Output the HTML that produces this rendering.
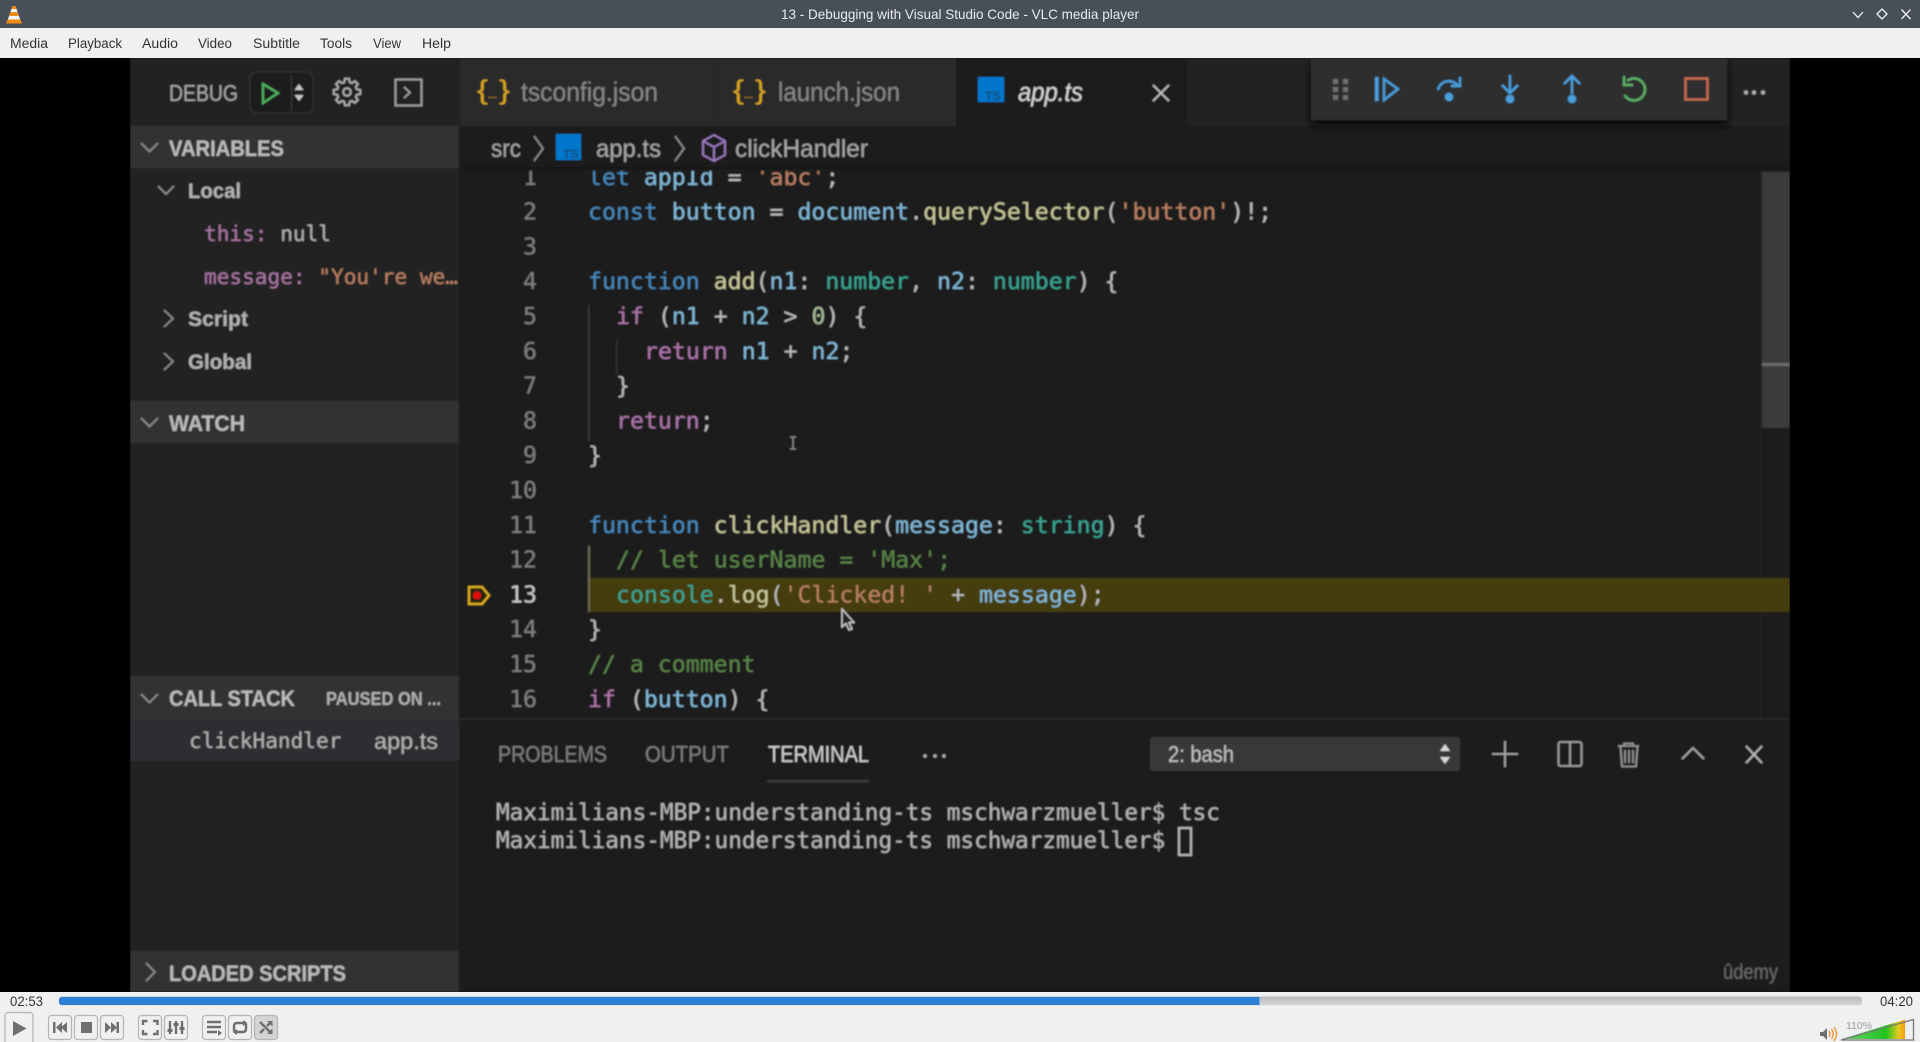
<!DOCTYPE html>
<html><head><meta charset="utf-8"><title>13 - Debugging with Visual Studio Code - VLC media player</title>
<style>
html,body{margin:0;padding:0;background:#000;width:1920px;height:1042px;overflow:hidden}
svg{display:block;position:absolute;left:0;top:0}
text{white-space:pre}
.s{font-family:"Liberation Sans",sans-serif}
.m{font-family:"DejaVu Sans Mono","Liberation Mono",monospace}
.c{font-size:23.2px}
.b{font-weight:bold}
.k{fill:#4a8bbf}.v{fill:#84bcdc}.f{fill:#cbcb9c}.t{fill:#3aa896}.q{fill:#bc8265}.p{fill:#b077ad}.g{fill:#5c8649}.d{fill:#bdbdbd}
.n{fill:#808080;font-size:23.2px}
.ch{fill:none;stroke:#8e8e8e;stroke-width:1.700}
.ctl{fill:#eff0f1;stroke:#b4b4b4;stroke-width:1.2}
.ic{fill:#6f6f6f}
.ils{fill:none;stroke:#6f6f6f;stroke-width:2.4}
.bl{fill:none;stroke:#4a9fdc;stroke-width:2.400}
.menu{font-size:13.500px;fill:#333}
</style></head>
<body>
<svg width="1920" height="1042" viewBox="0 0 1920 1042" xmlns="http://www.w3.org/2000/svg">
<defs>
<filter id="bl" x="0" y="0" width="100%" height="100%"><feGaussianBlur stdDeviation="0.8"/></filter>
<filter id="sh" x="-5%" y="-20%" width="110%" height="160%"><feGaussianBlur stdDeviation="5"/></filter>
<clipPath id="code"><rect x="460" y="171" width="1330" height="547"/></clipPath>
<linearGradient id="vg" x1="0" x2="1" y1="0" y2="0"><stop offset="0" stop-color="#6fd46f"/><stop offset=".7" stop-color="#1fc41f"/><stop offset=".9" stop-color="#e8c820"/><stop offset="1" stop-color="#f59a10"/></linearGradient>
<linearGradient id="gr" x1="0" x2="0" y1="0" y2="1"><stop offset="0" stop-color="#b8babc"/><stop offset="1" stop-color="#d6d8da"/></linearGradient>
<linearGradient id="blu" x1="0" x2="0" y1="0" y2="1"><stop offset="0" stop-color="#2f82d6"/><stop offset="1" stop-color="#2a7fd4"/></linearGradient>
</defs>

<!-- title bar -->
<rect x="0" y="0" width="1920" height="28" fill="#475058"/>
<g>
<path d="M12.500 6h3l5.500 16h-14z" fill="#f3f3f3"/>
<path d="M12.500 6h3l1 3h-5zM10.500 12h7l1.300 4h-9.600z" fill="#f08a10"/>
<path d="M8 19.500h12l2 3.500q0 .5-1 .5H7q-1 0-1-.5z" fill="#f08a10"/>
</g>
<text x="781" y="19" class="s" font-size="14" fill="#e8eaec" textLength="358" lengthAdjust="spacingAndGlyphs">13 - Debugging with Visual Studio Code - VLC media player</text>
<path d="M1853 12l5 5.500 5-5.500" fill="none" stroke="#f2f2f2" stroke-width="1.300"/>
<path d="M1882 9l5 5-5 5-5-5z" fill="none" stroke="#f2f2f2" stroke-width="1.300"/>
<path d="M1901.500 9.500l9 9.500M1910.500 9.500l-9 9.500" fill="none" stroke="#f2f2f2" stroke-width="1.300"/>

<!-- menu bar -->
<rect x="0" y="28" width="1920" height="30" fill="#eff0f1"/>
<g class="s">
<text x="10" y="48" class="menu" textLength="38" lengthAdjust="spacingAndGlyphs">Media</text>
<text x="68" y="48" class="menu" textLength="54" lengthAdjust="spacingAndGlyphs">Playback</text>
<text x="142" y="48" class="menu" textLength="36" lengthAdjust="spacingAndGlyphs">Audio</text>
<text x="198" y="48" class="menu" textLength="34" lengthAdjust="spacingAndGlyphs">Video</text>
<text x="253" y="48" class="menu" textLength="47" lengthAdjust="spacingAndGlyphs">Subtitle</text>
<text x="320" y="48" class="menu" textLength="32" lengthAdjust="spacingAndGlyphs">Tools</text>
<text x="373" y="48" class="menu" textLength="28" lengthAdjust="spacingAndGlyphs">View</text>
<text x="422" y="48" class="menu" textLength="29" lengthAdjust="spacingAndGlyphs">Help</text>
</g>

<!-- video black -->
<rect x="0" y="58" width="1920" height="934" fill="#000"/>

<g filter="url(#bl)">
<!-- vscode base -->
<rect x="130" y="58" width="1660" height="934" fill="#1c1c1c"/>

<!-- sidebar -->
<rect x="130" y="58" width="329" height="934" fill="#212121"/>
<rect x="130" y="126" width="329" height="42" fill="#333333"/>
<rect x="130" y="401" width="329" height="42" fill="#333333"/>
<rect x="130" y="676" width="329" height="44" fill="#333333"/>
<rect x="130" y="720" width="329" height="41" fill="#2d2d33"/>
<rect x="130" y="951" width="329" height="41" fill="#333333"/>

<text x="169" y="101" class="s" font-size="23" fill="#a8a8a8" textLength="69" lengthAdjust="spacingAndGlyphs">DEBUG</text>
<rect x="250" y="72" width="63" height="41" rx="7" fill="#1f1f1f" stroke="#303030" stroke-width="1.500"/>
<path d="M263 84l15 9-15 10z" fill="none" stroke="#4fb35f" stroke-width="2.200"/>
<rect x="291" y="75" width="1" height="35" fill="#3c3c3c"/>
<path d="M294.500 90l4.500-6 4.500 6zM294.500 95l4.500 6 4.500-6z" fill="#c8c8c8"/>
<g fill="none" stroke="#b4b4b4" stroke-width="1.800" transform="translate(347 92)">
<circle cx="0" cy="0" r="3.800"/>
<path d="M9.610-2.760L13.330-2.110V2.110L9.610 2.760L8.750 4.850L10.920 7.940L7.940 10.920L4.850 8.750L2.760 9.610L2.110 13.330H-2.110L-2.760 9.610L-4.850 8.750L-7.940 10.920L-10.920 7.940L-8.750 4.850L-9.610 2.760L-13.330 2.110V-2.110L-9.610-2.760L-8.750-4.850L-10.920-7.940L-7.940-10.920L-4.850-8.750L-2.760-9.610L-2.110-13.330H2.110L2.760-9.610L4.850-8.750L7.940-10.920L10.920-7.940L8.750-4.850Z"/>
</g>
<rect x="395.500" y="79.500" width="26" height="26" fill="none" stroke="#a8a8a8" stroke-width="1.800"/>
<path d="M404 87l6 5.500-6 5.500" fill="none" stroke="#a8a8a8" stroke-width="1.600"/>

<path class="ch" d="M141 143l8.500 8.500 8.500-8.500"/>
<text x="169" y="156" class="s b" font-size="22" fill="#bcbcbc" textLength="115" lengthAdjust="spacingAndGlyphs">VARIABLES</text>
<path class="ch" d="M158 186l8 8 8-8"/>
<text x="188" y="198" class="s b" font-size="21" fill="#b4b4b4" textLength="53" lengthAdjust="spacingAndGlyphs">Local</text>
<text x="204" y="241" class="m" font-size="21.100"><tspan fill="#ab78a5">this:</tspan><tspan fill="#b4b4b4"> null</tspan></text>
<text x="204" y="284" class="m" font-size="21.100"><tspan fill="#ab78a5">message:</tspan><tspan fill="#bc8265"> "You're we…</tspan></text>
<path class="ch" d="M164 310l9 8.500-9 8.500"/>
<text x="188" y="326" class="s b" font-size="21" fill="#b4b4b4" textLength="60" lengthAdjust="spacingAndGlyphs">Script</text>
<path class="ch" d="M164 353l9 8.500-9 8.500"/>
<text x="188" y="369" class="s b" font-size="21" fill="#b4b4b4" textLength="64" lengthAdjust="spacingAndGlyphs">Global</text>
<path class="ch" d="M141 418l8.500 8.500 8.500-8.500"/>
<text x="169" y="431" class="s b" font-size="22" fill="#bcbcbc" textLength="76" lengthAdjust="spacingAndGlyphs">WATCH</text>

<path class="ch" d="M141 694l8.500 8.500 8.500-8.500"/>
<text x="169" y="706" class="s b" font-size="22" fill="#bcbcbc" textLength="126" lengthAdjust="spacingAndGlyphs">CALL STACK</text>
<text x="326" y="705" class="s b" font-size="18" fill="#b0b0b0" textLength="115" lengthAdjust="spacingAndGlyphs">PAUSED ON ...</text>
<text x="189" y="748" class="m" font-size="21.100" fill="#b4b4b4">clickHandler</text>
<text x="374" y="749" class="s" font-size="23" fill="#b4b4b4" textLength="64" lengthAdjust="spacingAndGlyphs">app.ts</text>
<path class="ch" d="M146 963l9 9-9 9"/>
<text x="169" y="981" class="s b" font-size="22" fill="#bcbcbc" textLength="177" lengthAdjust="spacingAndGlyphs">LOADED SCRIPTS</text>

<!-- tabs -->
<rect x="460" y="58" width="1330" height="68" fill="#232323"/>
<rect x="460" y="58" width="254" height="68" fill="#2a2a2a"/>
<rect x="715" y="58" width="241" height="68" fill="#2a2a2a"/>
<rect x="956" y="58" width="231" height="68" fill="#1c1c1c"/>
<text x="477" y="99" class="s" font-size="27" fill="#d9a520" textLength="11" lengthAdjust="spacingAndGlyphs">{</text>
<text x="488" y="98" class="s" font-size="11" fill="#d9a520">...</text>
<text x="499" y="99" class="s" font-size="27" fill="#d9a520" textLength="11" lengthAdjust="spacingAndGlyphs">}</text>
<text x="521" y="101" class="s" font-size="27" fill="#888" textLength="137" lengthAdjust="spacingAndGlyphs">tsconfig.json</text>
<text x="733" y="99" class="s" font-size="27" fill="#d9a520" textLength="11" lengthAdjust="spacingAndGlyphs">{</text>
<text x="744" y="98" class="s" font-size="11" fill="#d9a520">...</text>
<text x="755" y="99" class="s" font-size="27" fill="#d9a520" textLength="11" lengthAdjust="spacingAndGlyphs">}</text>
<text x="778" y="101" class="s" font-size="27" fill="#888" textLength="122" lengthAdjust="spacingAndGlyphs">launch.json</text>
<rect x="978" y="77" width="26" height="25" fill="#0077cc"/>
<text x="985" y="100" class="s" font-size="12" fill="#15466f" font-weight="bold">TS</text>
<text x="1018" y="101" class="s" font-size="27" font-style="italic" fill="#d8d8d8" textLength="65" lengthAdjust="spacingAndGlyphs">app.ts</text>
<path d="M1153 85l16 16M1169 85l-16 16" fill="none" stroke="#c0c0c0" stroke-width="1.900"/>

<!-- breadcrumb -->
<rect x="460" y="126" width="1330" height="42" fill="#1c1c1c"/>
<rect x="460" y="167" width="1330" height="2" fill="#161616"/>
<text x="491" y="157" class="s" font-size="25" fill="#a8a8a8" textLength="30" lengthAdjust="spacingAndGlyphs">src</text>
<path class="ch" d="M534 136l9 12.500-9 12.500"/>
<rect x="556" y="134" width="25" height="26" fill="#0077cc"/>
<text x="563" y="158" class="s" font-size="12" fill="#15466f" font-weight="bold">TS</text>
<text x="596" y="157" class="s" font-size="25" fill="#a8a8a8" textLength="65" lengthAdjust="spacingAndGlyphs">app.ts</text>
<path class="ch" d="M675 136l9 12.500-9 12.500"/>
<path d="M714 135l11 6v14l-11 6-11-6v-14zM703 141l11 6 11-6M714 147v14" fill="none" stroke="#a07ec8" stroke-width="1.800"/>
<text x="735" y="157" class="s" font-size="25" fill="#a8a8a8" textLength="133" lengthAdjust="spacingAndGlyphs">clickHandler</text>

<!-- code -->
<g clip-path="url(#code)">
<rect x="1760" y="168" width="1" height="550" fill="#222"/>
<rect x="588" y="578" width="1202" height="34" fill="#453e0b"/>
<rect x="588" y="305" width="1.500" height="136" fill="#3a3a3a"/>
<rect x="616" y="340" width="1.500" height="34" fill="#333"/>
<rect x="588" y="546" width="2" height="66" fill="#6a6a50"/>
<g transform="translate(0 -1.200)">
<g text-anchor="end" class="m n">
<text x="537" y="186">1</text><text x="537" y="220.800">2</text><text x="537" y="255.600">3</text><text x="537" y="290.400">4</text><text x="537" y="325.200">5</text><text x="537" y="360">6</text><text x="537" y="394.800">7</text><text x="537" y="429.600">8</text><text x="537" y="464.400">9</text><text x="537" y="499.200">10</text><text x="537" y="534">11</text><text x="537" y="568.800">12</text><text x="537" y="603.600" style="fill:#cccccc">13</text><text x="537" y="638.400">14</text><text x="537" y="673.200">15</text><text x="537" y="708">16</text>
</g>
<g class="m c">
<text x="588" y="186"><tspan class="k">let</tspan><tspan class="v"> appId</tspan><tspan class="d"> = </tspan><tspan class="q">'abc'</tspan><tspan class="d">;</tspan></text>
<text x="588" y="220.800"><tspan class="k">const</tspan><tspan class="v"> button</tspan><tspan class="d"> = </tspan><tspan class="v">document</tspan><tspan class="d">.</tspan><tspan class="f">querySelector</tspan><tspan class="d">(</tspan><tspan class="q">'button'</tspan><tspan class="d">)!;</tspan></text>
<text x="588" y="290.400"><tspan class="k">function</tspan><tspan class="f"> add</tspan><tspan class="d">(</tspan><tspan class="v">n1</tspan><tspan class="d">: </tspan><tspan class="t">number</tspan><tspan class="d">, </tspan><tspan class="v">n2</tspan><tspan class="d">: </tspan><tspan class="t">number</tspan><tspan class="d">) {</tspan></text>
<text x="616" y="325.200"><tspan class="p">if</tspan><tspan class="d"> (</tspan><tspan class="v">n1</tspan><tspan class="d"> + </tspan><tspan class="v">n2</tspan><tspan class="d"> &gt; </tspan><tspan fill="#a8c09a">0</tspan><tspan class="d">) {</tspan></text>
<text x="644" y="360"><tspan class="p">return</tspan><tspan class="v"> n1</tspan><tspan class="d"> + </tspan><tspan class="v">n2</tspan><tspan class="d">;</tspan></text>
<text x="616" y="394.800" class="d">}</text>
<text x="616" y="429.600"><tspan class="p">return</tspan><tspan class="d">;</tspan></text>
<text x="588" y="464.400" class="d">}</text>
<text x="588" y="534"><tspan class="k">function</tspan><tspan class="f"> clickHandler</tspan><tspan class="d">(</tspan><tspan class="v">message</tspan><tspan class="d">: </tspan><tspan class="t">string</tspan><tspan class="d">) {</tspan></text>
<text x="616" y="568.800" class="g">// let userName = 'Max';</text>
<text x="616" y="603.600"><tspan class="t">console</tspan><tspan class="d">.</tspan><tspan class="f">log</tspan><tspan class="d">(</tspan><tspan class="q">'Clicked! '</tspan><tspan class="d"> + </tspan><tspan class="v">message</tspan><tspan class="d">);</tspan></text>
<text x="588" y="638.400" class="d">}</text>
<text x="588" y="673.200" class="g">// a comment</text>
<text x="588" y="708"><tspan class="p">if</tspan><tspan class="d"> (</tspan><tspan class="v">button</tspan><tspan class="d">) {</tspan></text>
</g>
</g>
</g>
<path d="M469 587h13l7 8.500-7 8.500h-13z" fill="#2a2410" stroke="#e0b020" stroke-width="2.200"/>
<circle cx="477" cy="595.500" r="4" fill="#e01010"/>
<path d="M790 437h6M790 449h6M793 437v12" stroke="#999" stroke-width="1" fill="none"/>
<path d="M842 609v18l4-3.500 3 6.500 3-1-3-6.500h5z" fill="#222" stroke="#ddd" stroke-width="1.200"/>

<!-- scrollbar -->
<rect x="1762" y="172" width="28" height="256" fill="#3a3a3a"/>
<rect x="1762" y="363" width="28" height="3" fill="#6a6a6a"/>

<!-- debug toolbar -->
<rect x="1311" y="58" width="416" height="62" fill="#000" opacity=".85" filter="url(#sh)" transform="translate(0 5)"/>
<rect x="1311" y="58" width="416" height="62" fill="#2f2f2f"/>
<g fill="#6e6e6e"><rect x="1333" y="79" width="5" height="5"/><rect x="1343" y="79" width="5" height="5"/><rect x="1333" y="87" width="5" height="5"/><rect x="1343" y="87" width="5" height="5"/><rect x="1333" y="95" width="5" height="5"/><rect x="1343" y="95" width="5" height="5"/></g>
<rect x="1375" y="77" width="3.500" height="24" fill="#4a9fdc"/>
<path class="bl" d="M1384 79l14 10-14 11z"/>
<path class="bl" d="M1438 90a11 11 0 0 1 20-4"/><path class="bl" d="M1460 77v9h-9"/>
<circle cx="1449" cy="97" r="4.200" fill="#4a9fdc"/>
<path class="bl" d="M1510 75v18M1502 85l8 8 8-8"/><circle cx="1510" cy="99" r="4.200" fill="#4a9fdc"/>
<path class="bl" d="M1572 77v17M1564 84l8-8 8 8"/><circle cx="1572" cy="99" r="4.200" fill="#4a9fdc"/>
<path d="M1627 81a11 11 0 1 1-2.500 14" fill="none" stroke="#5cb368" stroke-width="2.400"/><path d="M1624 76v9h9" fill="none" stroke="#5cb368" stroke-width="2.400"/>
<rect x="1685.500" y="78.500" width="22" height="21" fill="none" stroke="#c96a50" stroke-width="2.400"/>
<g fill="#b4b4b4"><circle cx="1746" cy="92.500" r="2"/><circle cx="1754" cy="92.500" r="2"/><circle cx="1763" cy="92.500" r="2"/></g>

<!-- panel -->
<rect x="460" y="718" width="1330" height="2" fill="#2c2c2c"/>
<text x="498" y="762" class="s" font-size="23" fill="#808080" textLength="109" lengthAdjust="spacingAndGlyphs">PROBLEMS</text>
<text x="645" y="762" class="s" font-size="23" fill="#808080" textLength="84" lengthAdjust="spacingAndGlyphs">OUTPUT</text>
<text x="768" y="762" class="s" font-size="23" fill="#d4d4d4" textLength="101" lengthAdjust="spacingAndGlyphs">TERMINAL</text>
<rect x="767" y="780" width="102" height="2.500" fill="#3a3a3a"/>
<g fill="#b4b4b4"><circle cx="925" cy="756" r="1.700"/><circle cx="935" cy="756" r="1.700"/><circle cx="944" cy="756" r="1.700"/></g>
<rect x="1150" y="737" width="310" height="34" rx="3" fill="#383838"/>
<text x="1168" y="762" class="s" font-size="23" fill="#c4c4c4" textLength="66" lengthAdjust="spacingAndGlyphs">2: bash</text>
<path d="M1440 751l5-7 5 7zM1440 757l5 7 5-7z" fill="#d8d8d8"/>
<path d="M1505 741v26M1492 754h26" stroke="#aaa" stroke-width="1.800" fill="none"/>
<rect x="1558.500" y="742" width="23" height="24" rx="2" fill="none" stroke="#a4a4a4" stroke-width="1.800"/><path d="M1570 742v24" stroke="#a4a4a4" stroke-width="1.800"/>
<path d="M1618 746h21M1624 746v-2.500h9v2.500M1620.500 746l1.500 20.500h14l1.500-20.500M1625 750v13M1629 750v13M1633 750v13" fill="none" stroke="#a0a0a0" stroke-width="1.600"/>
<path d="M1682 759l11-11 11 11" fill="none" stroke="#aaa" stroke-width="1.900"/>
<path d="M1746 746l16 17M1762 746l-16 17" fill="none" stroke="#bbb" stroke-width="1.900"/>

<g class="m" font-size="22.700" fill="#b8b8b8">
<text x="496" y="820">Maximilians-MBP:understanding-ts mschwarzmueller$ tsc</text>
<text x="496" y="848">Maximilians-MBP:understanding-ts mschwarzmueller$</text>
</g>
<rect x="1179" y="828" width="12" height="27" fill="none" stroke="#b8b8b8" stroke-width="2"/>
<text x="1723" y="979" class="s" font-size="21" fill="#6a6a6a" textLength="55" lengthAdjust="spacingAndGlyphs">ûdemy</text>
</g>

<!-- controller -->
<rect x="0" y="992" width="1920" height="50" fill="#eff0f1"/>
<text x="10" y="1006" class="s" font-size="13.500" fill="#333" textLength="33" lengthAdjust="spacingAndGlyphs">02:53</text>
<rect x="59" y="996.500" width="1803" height="9" rx="3" fill="url(#gr)"/>
<path d="M62 997H1259.500V1005H62q-3 0-3-3v-2q0-3 3-3z" fill="url(#blu)"/>
<text x="1880" y="1006" class="s" font-size="13.500" fill="#333" textLength="33" lengthAdjust="spacingAndGlyphs">04:20</text>

<rect class="ctl" x="5" y="1012.500" width="28" height="32" rx="3"/>
<path d="M13 1021l13.500 7.500-13.500 7.500z" class="ic"/>

<rect class="ctl" x="48.500" y="1015.500" width="23" height="24" rx="3"/>
<rect class="ctl" x="74.500" y="1015.500" width="23" height="24" rx="3"/>
<rect class="ctl" x="100.500" y="1015.500" width="23" height="24" rx="3"/>
<rect class="ctl" x="138.500" y="1015.500" width="23" height="24" rx="3"/>
<rect class="ctl" x="164.500" y="1015.500" width="23" height="24" rx="3"/>
<rect class="ctl" x="202.500" y="1015.500" width="23" height="24" rx="3"/>
<rect class="ctl" x="228.500" y="1015.500" width="23" height="24" rx="3"/>
<rect x="254.500" y="1015.500" width="23" height="24" rx="3" fill="#d3d4d6" stroke="#b4b4b4" stroke-width="1.200"/>

<path class="ic" d="M53 1022h2.500v11H53zM56 1027.500l6-5.500v11zM61 1027.500l6-5.500v11z"/>
<rect class="ic" x="81" y="1022" width="11" height="11"/>
<path class="ic" d="M105 1022l6 5.500-6 5.500zM111 1022l6 5.500-6 5.500zM116.500 1022h2.500v11h-2.500z"/>
<path class="ils" d="M143 1025v-4h4.500M153 1021h4.500v4M157.500 1030v4h-4.500M147.500 1034H143v-4"/>
<path class="ils" d="M170 1021v13M176 1021v13M182 1021v13" stroke-width="1.800"/>
<rect class="ic" x="167.500" y="1029" width="5" height="3"/><rect class="ic" x="173.500" y="1023" width="5" height="3"/><rect class="ic" x="179.500" y="1027" width="5" height="3"/>
<path class="ils" d="M207 1022h14M207 1027h14M207 1032h10" stroke-width="2"/><path class="ic" d="M218 1030l4 3-4 3z"/>
<path class="ils" d="M234 1031v-5q0-3 3-3h9M246 1024v5q0 3-3 3h-9" stroke-width="2"/><path class="ic" d="M243 1020l4.500 3-4.500 3zM237 1029l-4.500 3 4.500 3z"/>
<path class="ils" d="M260 1022l11 11M260 1033l4-4M267 1026l4-4" stroke-width="2"/><path class="ic" d="M267 1021h5.500v5.500zM267 1034h5.500v-5.500z"/>

<path d="M1820 1033h3l4-4v12l-4-4h-3z" fill="#6f6f6f" transform="translate(0 -1)"/>
<path d="M1829 1032q2 3 0 6M1831.500 1030q3.500 5 0 10M1834 1028q5 7 0 14" fill="none" stroke="#f09020" stroke-width="1.300" transform="translate(0 -1)"/>
<path d="M1842 1039l63-19.500v19.500z" fill="url(#vg)"/>
<path d="M1841 1040l72.500-20.500v20.500z" fill="none" stroke="#777" stroke-width="1.300"/>
<text x="1846" y="1029" class="s" font-size="10.500" fill="#9a9a9a">110%</text>
</svg>
</body></html>
